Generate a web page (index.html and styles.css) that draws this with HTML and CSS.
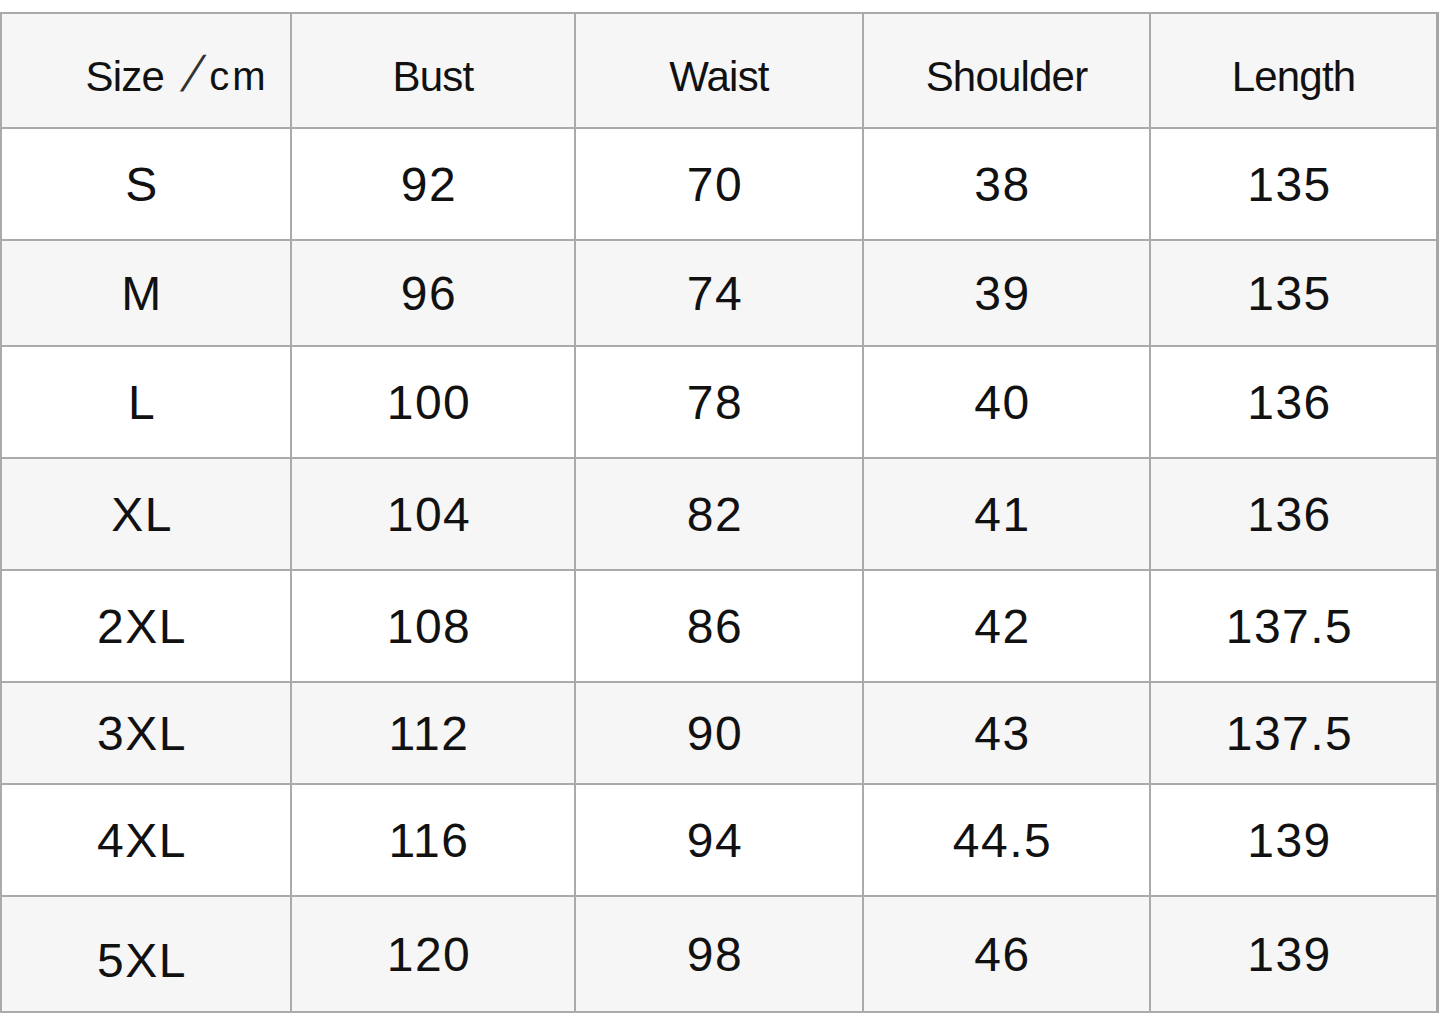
FILE: index.html
```html
<!DOCTYPE html>
<html>
<head>
<meta charset="utf-8">
<link rel="stylesheet" href="styles.css">
</head>
<body>
<div class="chart">
  <div class="cell head size-head">Size<span class="slash">/</span><span class="cm">cm</span></div>
  <div class="cell head">Bust</div>
  <div class="cell head">Waist</div>
  <div class="cell head">Shoulder</div>
  <div class="cell head">Length</div>

  <div class="cell">S</div><div class="cell">92</div><div class="cell">70</div><div class="cell">38</div><div class="cell">135</div>
  <div class="cell alt">M</div><div class="cell alt">96</div><div class="cell alt">74</div><div class="cell alt">39</div><div class="cell alt">135</div>
  <div class="cell">L</div><div class="cell">100</div><div class="cell">78</div><div class="cell">40</div><div class="cell">136</div>
  <div class="cell alt">XL</div><div class="cell alt">104</div><div class="cell alt">82</div><div class="cell alt">41</div><div class="cell alt">136</div>
  <div class="cell">2XL</div><div class="cell">108</div><div class="cell">86</div><div class="cell">42</div><div class="cell">137.5</div>
  <div class="cell alt">3XL</div><div class="cell alt">112</div><div class="cell alt">90</div><div class="cell alt">43</div><div class="cell alt">137.5</div>
  <div class="cell">4XL</div><div class="cell">116</div><div class="cell">94</div><div class="cell">44.5</div><div class="cell">139</div>
  <div class="cell alt last">5XL</div><div class="cell alt">120</div><div class="cell alt">98</div><div class="cell alt">46</div><div class="cell alt">139</div>
</div>
</body>
</html>
```

FILE: styles.css
```css
html, body {
  margin: 0;
  padding: 0;
  background: #ffffff;
}

body {
  font-family: "Liberation Sans", Arial, sans-serif;
  color: #111111;
}

.chart {
  margin-top: 12px;
  width: max-content;
  display: grid;
  grid-template-columns: 288px 282px 286px 285px 285px;
  grid-template-rows: 113px 110px 104px 110px 110px 110px 100px 110px 114px;
  gap: 2px;
  background: #aaaaaa;
  border-top: 2px solid #aaaaaa;
  border-left: 2px solid #aaaaaa;
  border-right: 3px solid #a6a6a6;
  border-bottom: 2px solid #aaaaaa;
}

.cell {
  background: #ffffff;
  display: flex;
  align-items: center;
  justify-content: center;
  font-size: 48px;
  letter-spacing: 1.5px;
  padding-right: 8px;
  box-sizing: border-box;
}

.cell.alt {
  background: #f6f6f6;
}

.cell.last {
  padding-top: 12px;
}

.cell.head {
  background: #f6f6f6;
  font-size: 42px;
  letter-spacing: -0.8px;
  padding-right: 0;
  padding-top: 12px;
}

.size-head {
  padding-left: 62px;
}

.slash {
  display: inline-block;
  font-size: 50px;
  font-weight: normal;
  margin: 0 10px 0 22px;
  color: #333333;
  transform: skewX(-22deg) scaleX(0.85);
  position: relative;
  top: -3px;
}

.cm {
  letter-spacing: 3px;
  font-size: 40px;
}
```
